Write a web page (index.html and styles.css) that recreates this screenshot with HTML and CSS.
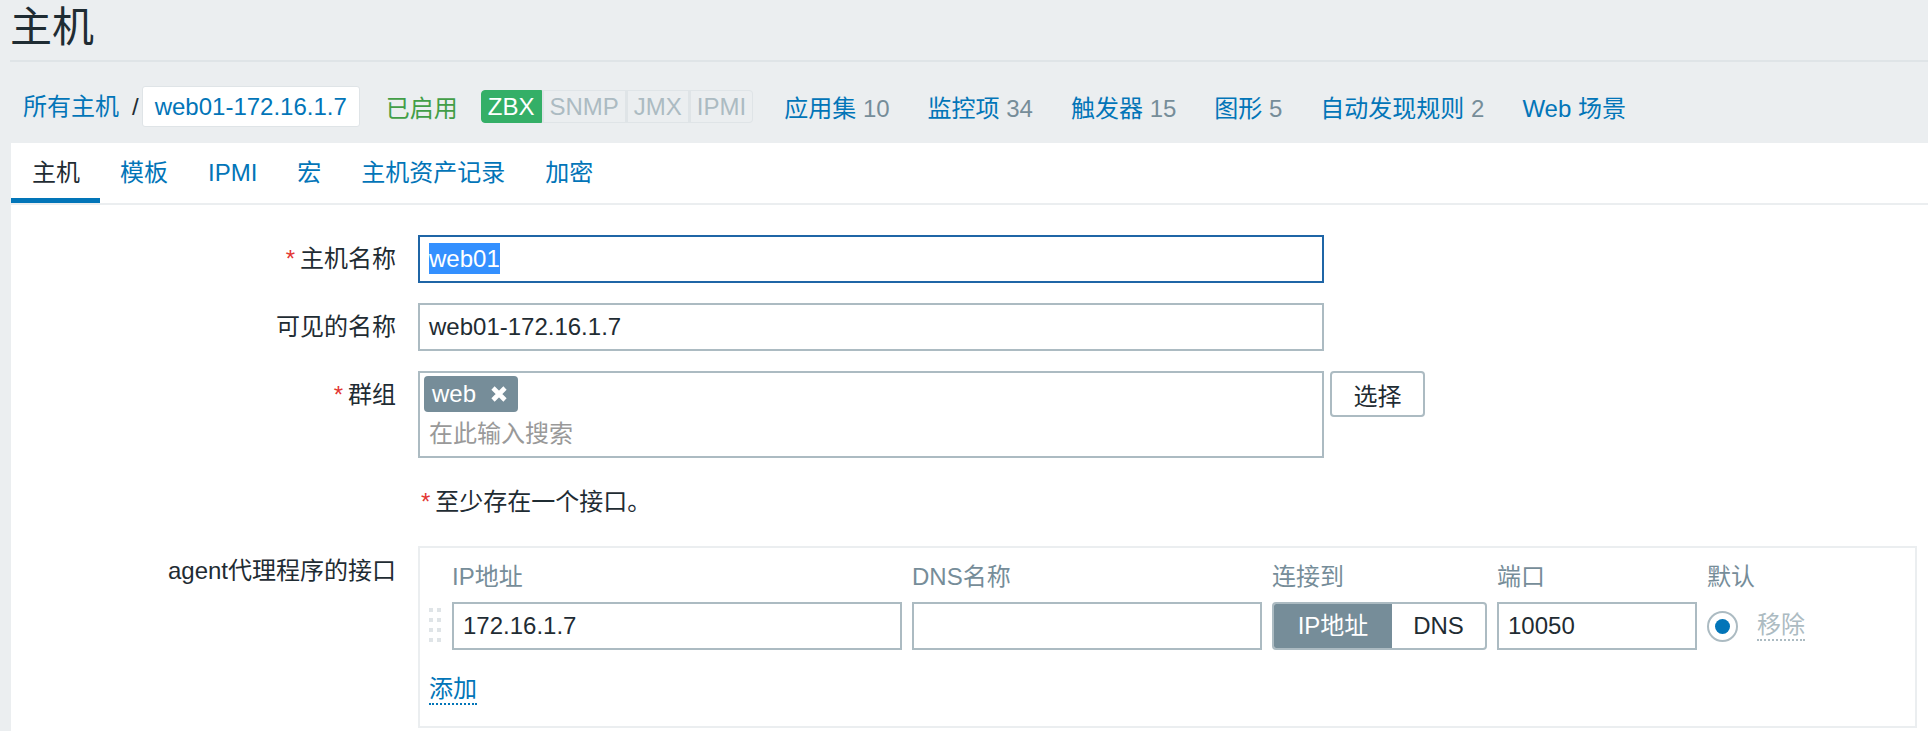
FILE: index.html
```html
<!DOCTYPE html>
<html lang="zh-CN">
<head>
    <meta charset="UTF-8">
    <meta name="viewport" content="width=device-width, initial-scale=1.0">
    <title>主机</title>
    <link rel="stylesheet" href="styles.css">
</head>
<body>

<header class="page-header">
    <h1>主机</h1>
</header>

<nav class="host-nav">
    <a class="crumb" href="#">所有主机</a>
    <span class="crumb-sep">/</span>
    <a class="crumb crumb-current" href="#">web01-172.16.1.7</a>
    <span class="status-enabled">已启用</span>
    <span class="avail">
        <span class="avail-item avail-on">ZBX</span><span class="avail-item">SNMP</span><span class="avail-item">JMX</span><span class="avail-item">IPMI</span>
    </span>
    <a class="nav-link first" href="#">应用集 <span class="count">10</span></a>
    <a class="nav-link" href="#">监控项 <span class="count">34</span></a>
    <a class="nav-link" href="#">触发器 <span class="count">15</span></a>
    <a class="nav-link" href="#">图形 <span class="count">5</span></a>
    <a class="nav-link" href="#">自动发现规则 <span class="count">2</span></a>
    <a class="nav-link" href="#">Web 场景</a>
</nav>

<main class="panel">
    <ul class="tabs">
        <li class="tab active">主机</li>
        <li class="tab">模板</li>
        <li class="tab">IPMI</li>
        <li class="tab">宏</li>
        <li class="tab">主机资产记录</li>
        <li class="tab">加密</li>
    </ul>

    <div class="form">
        <div class="form-row">
            <div class="form-label required">主机名称</div>
            <div class="form-field">
                <div class="text-box focused"><span class="selected">web01</span></div>
            </div>
        </div>

        <div class="form-row">
            <div class="form-label">可见的名称</div>
            <div class="form-field">
                <div class="text-box">web01-172.16.1.7</div>
            </div>
        </div>

        <div class="form-row">
            <div class="form-label required">群组</div>
            <div class="form-field field-inline">
                <div class="multiselect">
                    <span class="tag">web
                        <svg class="tag-remove" width="18" height="18" viewBox="0 0 18 18">
                            <path d="M3 3 L15 15 M15 3 L3 15" stroke="#fff" stroke-width="4.6"/>
                        </svg>
                    </span>
                    <div class="ms-search">在此输入搜索</div>
                </div>
                <button class="btn-alt">选择</button>
            </div>
        </div>

        <div class="form-row">
            <div class="form-label"></div>
            <div class="form-field note"><span class="asterisk">*</span>至少存在一个接口。</div>
        </div>

        <div class="form-row">
            <div class="form-label label-top">agent代理程序的接口</div>
            <div class="form-field">
                <div class="iface-box">
                    <div class="iface-grid">
                        <div></div>
                        <div class="iface-head">IP地址</div>
                        <div class="iface-head">DNS名称</div>
                        <div class="iface-head">连接到</div>
                        <div class="iface-head">端口</div>
                        <div class="iface-head">默认</div>

                        <div class="drag-handle">
                            <svg width="12" height="36" viewBox="0 0 12 36">
                                <rect x="0" y="0" width="4" height="4"/><rect x="8" y="0" width="4" height="4"/>
                                <rect x="0" y="10" width="4" height="4"/><rect x="8" y="10" width="4" height="4"/>
                                <rect x="0" y="20" width="4" height="4"/><rect x="8" y="20" width="4" height="4"/>
                                <rect x="0" y="30" width="4" height="4"/><rect x="8" y="30" width="4" height="4"/>
                            </svg>
                        </div>
                        <div class="text-box cell-box">172.16.1.7</div>
                        <div class="text-box cell-box"></div>
                        <div class="toggle">
                            <span class="toggle-item on">IP地址</span>
                            <span class="toggle-item">DNS</span>
                        </div>
                        <div class="text-box cell-box">10050</div>
                        <div class="default-cell">
                            <span class="radio"><span class="radio-dot"></span></span>
                            <a class="link-disabled" href="#">移除</a>
                        </div>
                    </div>
                    <div class="iface-footer">
                        <a class="link-action" href="#">添加</a>
                    </div>
                </div>
            </div>
        </div>
    </div>
</main>

</body>
</html>
```

FILE: styles.css
```css
body {
    margin: 0;
    padding: 0;
    background-color: #ebeef0;
    font-family: "Liberation Sans", "Noto Sans CJK SC", sans-serif;
    font-size: 24px;
    color: #1f2c33;
    overflow: hidden;
}
a {
    text-decoration: none;
    color: #0275b8;
}

/* header */
.page-header {
    margin-left: 10px;
    height: 60px;
    border-bottom: 2px solid #dfe4e7;
}
.page-header h1 {
    margin: 0;
    padding-top: 3px;
    font-size: 42px;
    font-weight: normal;
    line-height: 50px;
    color: #1f2c33;
}

/* host navigation */
.host-nav {
    display: flex;
    align-items: center;
    height: 41px;
    padding: 24px 0 16px 11px;
    white-space: nowrap;
}
.crumb {
    padding: 0 12px;
    line-height: 39px;
}
.crumb-sep {
    color: #1f2c33;
    margin: 0 3px 0 1px;
}
.crumb-current {
    background-color: #fff;
    border: 1px solid #dfe4e7;
    border-radius: 3px;
}
.status-enabled {
    color: #429e47;
    margin-left: 26px;
}
.avail {
    display: flex;
    margin-left: 23px;
}
.avail-item {
    padding: 0 6px;
    line-height: 31px;
    border: 1px solid #dfe4e7;
    background-color: #ebeef0;
    color: #acbbc2;
}
.avail-item + .avail-item {
    border-left: 2px solid #dfe4e7;
}
.avail-item:first-child {
    border-radius: 4px 0 0 4px;
}
.avail-item:last-child {
    border-radius: 0 4px 4px 0;
}
.avail-on {
    background-color: #34af67;
    border-color: #34af67;
    color: #fff;
}
.nav-link {
    margin-left: 38px;
}
.nav-link.first {
    margin-left: 31px;
}
.count {
    color: #768d99;
}

/* content panel */
.panel {
    margin-left: 11px;
    background-color: #fff;
    min-height: 600px;
}
.tabs {
    display: flex;
    margin: 0;
    padding: 0;
    list-style: none;
    height: 60px;
    border-bottom: 2px solid #ebeef0;
}
.tab {
    padding: 0 20px 0 20px;
    line-height: 60px;
    color: #0275b8;
}
.tab:first-child {
    padding-left: 21px;
}
.tab.active {
    color: #1f2c33;
    box-shadow: inset 0 -5px 0 #0275b8;
}

/* form */
.form {
    display: flex;
    flex-direction: column;
    gap: 20px;
    padding: 30px 11px 0 0;
}
.form-row {
    display: flex;
}
.form-label {
    width: 385px;
    flex-shrink: 0;
    padding-right: 22px;
    text-align: right;
    line-height: 48px;
}
.label-top {
    padding-top: 1px;
}
.required::before {
    content: "*";
    color: #e33734;
    margin-right: 5px;
}
.form-field {
    flex: 1;
}
.field-inline {
    display: flex;
    align-items: flex-start;
}
.text-box {
    box-sizing: border-box;
    width: 906px;
    height: 48px;
    border: 2px solid #acbbc2;
    padding: 0 9px;
    line-height: 44px;
    background-color: #fff;
}
.text-box.focused {
    border-color: #1f65a6;
}
.selected {
    background-color: #3390ff;
    color: #fff;
    padding: 2px 0;
}
.multiselect {
    box-sizing: border-box;
    width: 906px;
    height: 87px;
    border: 2px solid #acbbc2;
    padding: 3px 4px;
}
.tag {
    display: inline-flex;
    align-items: center;
    height: 36px;
    padding: 0 10px 0 8px;
    background-color: #768d99;
    border-radius: 4px;
    color: #fff;
}
.tag-remove {
    margin-left: 14px;
}
.ms-search {
    margin-top: 7px;
    padding-left: 5px;
    line-height: 30px;
    color: #999;
}
.btn-alt {
    margin-left: 6px;
    width: 95px;
    height: 46px;
    border: 2px solid #acbbc2;
    border-radius: 4px;
    background-color: #fff;
    font-family: inherit;
    font-size: 24px;
    color: #1f2c33;
    padding: 0;
}
.note {
    line-height: 48px;
    padding-left: 3px;
}
.asterisk {
    color: #e33734;
    margin-right: 5px;
}

/* interfaces */
.iface-box {
    border: 2px solid #ebeef0;
    padding: 0 9px 21px 9px;
}
.iface-grid {
    display: grid;
    grid-template-columns: 13px 450px 350px 215px 200px auto;
    column-gap: 10px;
}
.iface-head {
    padding-top: 11px;
    line-height: 36px;
    margin-bottom: 7px;
    color: #768d99;
}
.drag-handle {
    align-self: center;
    fill: #dfe4e7;
    height: 36px;
}
.cell-box {
    width: auto;
}
.toggle {
    display: flex;
    height: 48px;
    box-sizing: border-box;
    border: 2px solid #acbbc2;
    border-radius: 4px;
    overflow: hidden;
}
.toggle-item {
    flex: 1;
    text-align: center;
    line-height: 44px;
}
.toggle-item.on {
    flex: 0 0 118px;
    background-color: #768d99;
    color: #fff;
}
.default-cell {
    display: flex;
    align-items: center;
}
.radio {
    box-sizing: border-box;
    width: 31px;
    height: 31px;
    border: 2px solid #acbbc2;
    border-radius: 50%;
    display: flex;
    align-items: center;
    justify-content: center;
}
.radio-dot {
    width: 15px;
    height: 15px;
    border-radius: 50%;
    background-color: #0275b8;
}
.link-disabled {
    margin-left: 19px;
    color: #acbbc2;
    border-bottom: 2px dotted #acbbc2;
    line-height: 28px;
}
.iface-footer {
    margin-top: 25px;
    padding-left: 0;
}
.link-action {
    display: inline-block;
    line-height: 28px;
    border-bottom: 2px dotted #0275b8;
}
```
